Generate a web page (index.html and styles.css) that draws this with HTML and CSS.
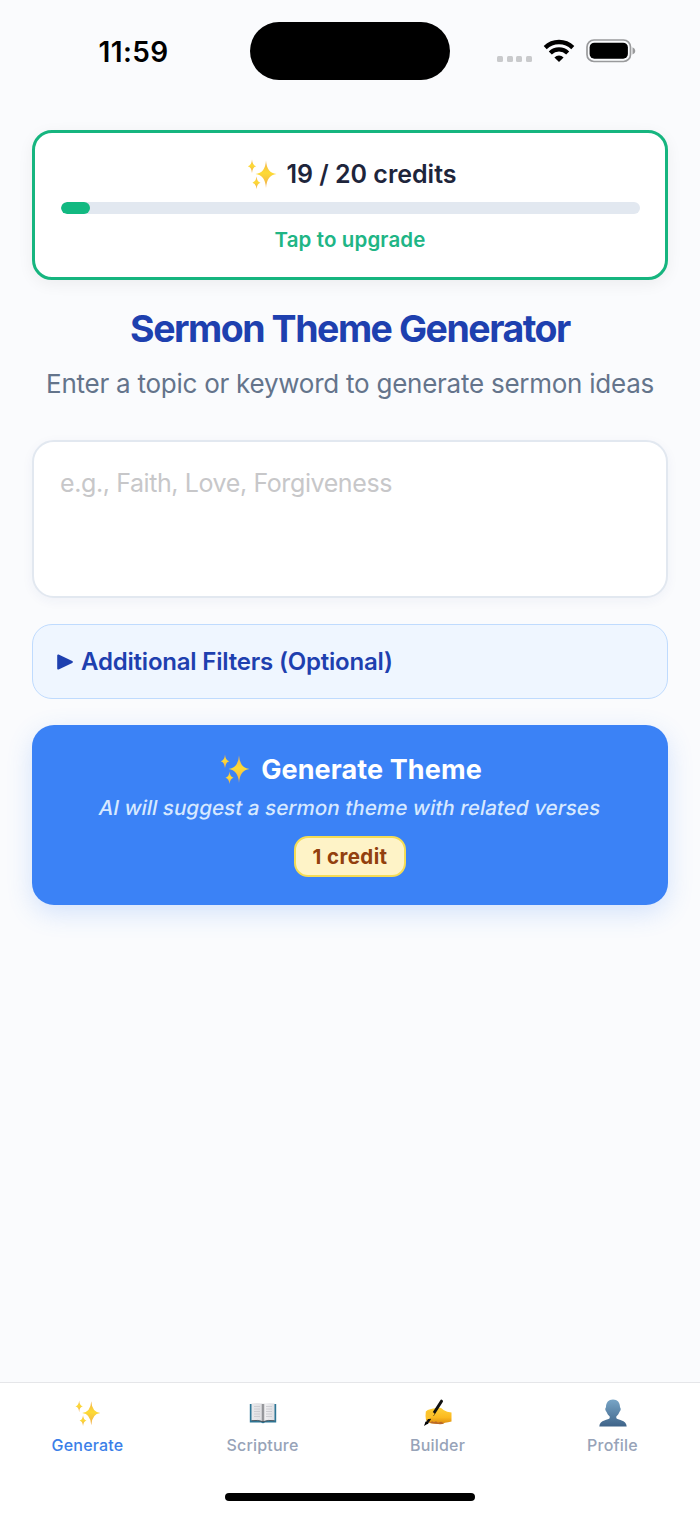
FILE: index.html
```html
<!DOCTYPE html>
<html lang="en">
<head>
<meta charset="utf-8">
<title>Sermon Theme Generator</title>
<link rel="stylesheet" href="styles.css">
</head>
<body>
<svg width="0" height="0" class="defs" aria-hidden="true">
  <defs>
    <linearGradient id="gold" x1="0" y1="0" x2="0" y2="1"><stop offset="0" stop-color="#f2b04e"/><stop offset=".45" stop-color="#fddb35"/><stop offset="1" stop-color="#f0aa50"/></linearGradient>
    <linearGradient id="bust" x1="0" y1="0" x2="0" y2="1"><stop offset="0" stop-color="#78a5c6"/><stop offset="1" stop-color="#3f6489"/></linearGradient>
    <linearGradient id="skin" x1="0" y1="0" x2="0" y2="1"><stop offset="0" stop-color="#ffd23c"/><stop offset=".6" stop-color="#fbb91f"/><stop offset="1" stop-color="#d98a10"/></linearGradient>
    <linearGradient id="page" x1="0" y1="0" x2="1" y2="0"><stop offset="0" stop-color="#e9e9ec"/><stop offset=".42" stop-color="#e0e0e3"/><stop offset=".5" stop-color="#77797e"/><stop offset=".58" stop-color="#f0f0f2"/><stop offset="1" stop-color="#dedee2"/></linearGradient>
    <symbol id="sparkles" viewBox="0 0 30 30">
      <g fill="url(#gold)">
        <path d="M19 1.500 Q19.800 14 29.500 15 Q19.800 16 19 29 Q18.200 16 8.500 15 Q18.200 14 19 1.500Z"/>
        <path d="M5 .5 Q5.500 6.500 9.200 7.200 Q5.500 8 5 14 Q4.500 8 .8 7.200 Q4.500 6.500 5 .5Z"/>
        <path d="M9.500 17.500 Q10 22.800 13.500 23.700 Q10 24.700 9.500 30 Q9 24.700 5.500 23.700 Q9 22.800 9.500 17.500Z"/>
      </g>
    </symbol>
  </defs>
</svg>
<div class="screen">
  <header class="status">
    <div class="clock">11:59</div>
    <div class="island"></div>
    <div class="indicators">
      <div class="dots"><i></i><i></i><i></i><i></i></div>
      <svg class="wifi" viewBox="0 0 32 24">
        <g fill="none" stroke="#000" stroke-width="4.300">
          <path d="M2.200 8.600 A19.800 19.800 0 0 1 29.800 8.600"/>
          <path d="M7.300 14 A12.400 12.400 0 0 1 24.700 14"/>
        </g>
        <path d="M16 23 L11.400 18.400 A6.500 6.500 0 0 1 20.600 18.400Z"/>
      </svg>
      <svg class="battery" viewBox="0 0 50 24">
        <rect x="1" y="1" width="43.500" height="21.500" rx="7" fill="none" stroke="#999a9c" stroke-width="1.700"/>
        <rect x="3.600" y="3.700" width="38.300" height="16" rx="4.800"/>
        <path d="M46.500 8.200 Q49.300 9.200 49.300 11.900 Q49.300 14.600 46.500 15.600Z" fill="#999a9c"/>
      </svg>
    </div>
  </header>

  <main class="content">
    <section class="credits">
      <div class="credits-row"><svg class="spark"><use href="#sparkles"/></svg><span class="credits-text">19 / 20 credits</span></div>
      <div class="track"><div class="fill" style="width:5.100%"></div></div>
      <div class="upgrade"><span>Tap to upgrade</span></div>
    </section>
    <h1 class="title">Sermon Theme Generator</h1>
    <p class="subtitle">Enter a topic or keyword to generate sermon ideas</p>
    <div class="topic">e.g., Faith, Love, Forgiveness</div>
    <div class="filters">
      <svg class="triangle" viewBox="0 0 16 16"><path d="M1.200 1.500 L14.800 8 L1.200 14.500Z" fill="#1e40af" stroke="#1e40af" stroke-width="2" stroke-linejoin="round"/></svg>
      <span>Additional Filters (Optional)</span>
    </div>
    <div class="generate">
      <div class="generate-row"><svg class="spark"><use href="#sparkles"/></svg><span class="generate-text">Generate Theme</span></div>
      <div class="generate-hint">AI will suggest a sermon theme with related verses</div>
      <div class="cost">1 credit</div>
    </div>
  </main>

  <nav class="tabs">
    <div class="tab active"><svg class="tab-icon" viewBox="0 0 28 28"><use href="#sparkles" x=".8" y="1" width="26" height="26"/></svg><span>Generate</span></div>
    <div class="tab"><svg class="tab-icon" viewBox="0 0 28 28">
      <path d="M.8 5 H27.200 V23.500 H16 Q14 25 12 23.500 H.8Z" fill="#2d7696"/>
      <path d="M2.500 4.500 Q9 3.300 14 5 Q19 3.300 25.500 4.500 V21.500 Q19 20.500 14 22.500 Q9 20.500 2.500 21.500Z" fill="url(#page)"/>
      <path d="M2.500 21.700 Q9 20.700 14 22.700 Q19 20.700 25.500 21.700" fill="none" stroke="#4d4d50" stroke-width=".8"/>
      <path d="M5 7.500h6M5 10h6M5 12.500h6M5 15h6M5 17.500h6M17 7.500h6M17 10h6M17 12.500h6M17 15h6M17 17.500h6" stroke="#c6c6cb" stroke-width=".8"/>
    </svg><span>Scripture</span></div>
    <div class="tab"><svg class="tab-icon wide" viewBox="0 0 30 28">
      <path d="M2.800 12.500 Q4 10.500 8 10 L15 8.500 Q18.500 8 20.500 11 Q24 13 28.500 13.500 V22.500 Q25 23.500 22 23.800 Q19 25.500 15 25 L9 24.500 Q4 23.500 3 21 Q2.200 17 2.800 12.500Z" fill="url(#skin)"/>
      <path d="M7 24 L9 22.300 11 23.300 13 22.300 15 23.800 18 22.800 21 24.200 Q19 25.500 15 25Z" fill="#b9682a"/>
      <path d="M18.500 2.200 L10 15.500" stroke="#111" stroke-width="3" stroke-linecap="round"/>
      <path d="M7 19.500 L3.500 24.500" stroke="#111" stroke-width="2.500"/>
      <path d="M2.600 22.500 L5.500 24.300 L1 27Z"/>
      <path d="M3 15 Q5 11 9.500 13 Q14 15 9 17.500 L6.500 20 L3 20Z" fill="#fcc32c"/>
    </svg><span>Builder</span></div>
    <div class="tab"><svg class="tab-icon" viewBox="0 0 28 28">
      <path d="M14 .5 C18.500 .5 21 3.500 21 8 C21 9 22 9 21.700 10.600 C21.400 12.300 20.600 12.500 20.200 13.500 C19.700 15 18.500 16.500 17.300 17.400 V19 C18 21 27.500 20.500 27.700 27.500 H.3 C.5 20.500 10 21 10.700 19 V17.400 C9.500 16.500 8.300 15 7.800 13.500 C7.400 12.500 6.600 12.300 6.300 10.600 C6 9 7 9 7 8 C7 3.500 9.500 .5 14 .5Z" fill="url(#bust)"/>
    </svg><span>Profile</span></div>
    <div class="home"></div>
  </nav>
</div>
</body>
</html>
```
FILE: styles.css
```css
* { box-sizing: border-box; }
body { margin: 0; background: #fafbfd; font-family: Inter, "Noto Sans", sans-serif; }
.defs { position: absolute; }
.screen { width: 700px; height: 1514px; display: flex; flex-direction: column; overflow: hidden; }

.status { height: 130px; padding-top: 22px; display: grid; grid-template-columns: 250px 200px 250px; align-items: start; }
.clock { padding-left: 17px; text-align: center; font-size: 28px; line-height: 60px; font-weight: 600; letter-spacing: .4px; color: #000; }
.island { height: 58px; border-radius: 29px; background: #000; }
.indicators { display: flex; padding: 17px 0 0 47px; height: 50px; }
.dots { display: flex; gap: 3.700px; padding-top: 17px; width: 46px; }
.dots i { width: 6px; height: 6px; border-radius: 1.500px; background: #c9cacc; }
.wifi { width: 32px; height: 24px; margin-right: 11px; }
.battery { width: 50px; height: 24px; }

.content { flex: 1; padding: 0 32px; display: flex; flex-direction: column; }
.credits { height: 150px; border: 3px solid #16b57f; border-radius: 20px; background: #fff; padding: 25px 25.500px 0; box-shadow: 0 4px 16px rgba(0,0,0,.06); }
.credits-row { display: flex; justify-content: center; align-items: center; height: 32px; padding-left: 3px; font-size: 25px; font-weight: 600; color: #1e253b; gap: 10px; }
.spark { width: 30px; height: 30px; }
.credits-text { letter-spacing: -.02px; }
.track { height: 12px; margin-top: 12px; border-radius: 6px; background: #e2e8f0; overflow: hidden; }
.fill { height: 100%; border-radius: 6px; background: #12b981; }
.upgrade { margin-top: 10px; text-align: center; font-size: 20.500px; line-height: 32px; font-weight: 600; letter-spacing: .12px; color: #20b585; }
.title { margin: 26px 0 0; text-align: center; font-size: 37.500px; line-height: 46px; font-weight: 700; letter-spacing: -1.480px; color: #1e40af; white-space: nowrap; }
.subtitle { margin: 14px -20px 0; text-align: center; font-size: 26px; line-height: 36px; color: #64748b; letter-spacing: -.25px; white-space: nowrap; }
.topic { margin-top: 38px; height: 158px; border: 2px solid #e2e8f0; border-radius: 22px; background: #fff; padding: 23px 26px; font-size: 25px; line-height: 36px; letter-spacing: -.4px; color: #c7c7c9; box-shadow: 0 3px 12px rgba(30,64,130,.05); }
.filters { margin-top: 26px; height: 75px; border: 1.500px solid #bfdbfe; border-radius: 20px; background: #eff6ff; padding-left: 24px; display: flex; align-items: center; gap: 8px; font-size: 24px; font-weight: 600; letter-spacing: -.2px; color: #1e40af; }
.triangle { width: 16px; height: 16px; }
.generate { margin-top: 26px; height: 180px; border-radius: 22px; background: #3b82f6; box-shadow: 0 8px 26px rgba(59,130,246,.2); display: flex; flex-direction: column; align-items: center; padding-top: 26px; }
.generate-row { display: flex; align-items: center; gap: 11px; height: 36px; padding-left: 2px; font-size: 27px; font-weight: 700; letter-spacing: .1px; color: #fff; }
.generate-hint { height: 28px; margin-top: 7px; line-height: 28px; font-size: 20.500px; font-weight: 500; letter-spacing: .08px; color: #d7e9ff; white-space: nowrap; transform: skewX(-11deg); }
.cost { margin-top: 14px; width: 112px; height: 41px; border: 2px solid #f4dc55; border-radius: 14px; background: #fef3c7; text-align: center; font-size: 20.500px; line-height: 37px; font-weight: 700; letter-spacing: .4px; color: #92400e; }

.tabs { height: 132px; border-top: 1px solid #e5e6e9; background: #fff; display: grid; grid-template-columns: repeat(4, 175px); grid-template-rows: 110px 8px; }
.tab { display: flex; flex-direction: column; align-items: center; padding-top: 15.500px; font-size: 16px; line-height: 20px; font-weight: 500; letter-spacing: .2px; color: #97a3b8; }
.tab-icon { width: 28px; height: 28px; margin-bottom: 8px; }
.tab-icon.wide { width: 30px; }
.active { color: #3b7fe8; }
.home { grid-column: 1 / -1; justify-self: center; width: 250px; height: 8px; border-radius: 4px; background: #000; }
```
